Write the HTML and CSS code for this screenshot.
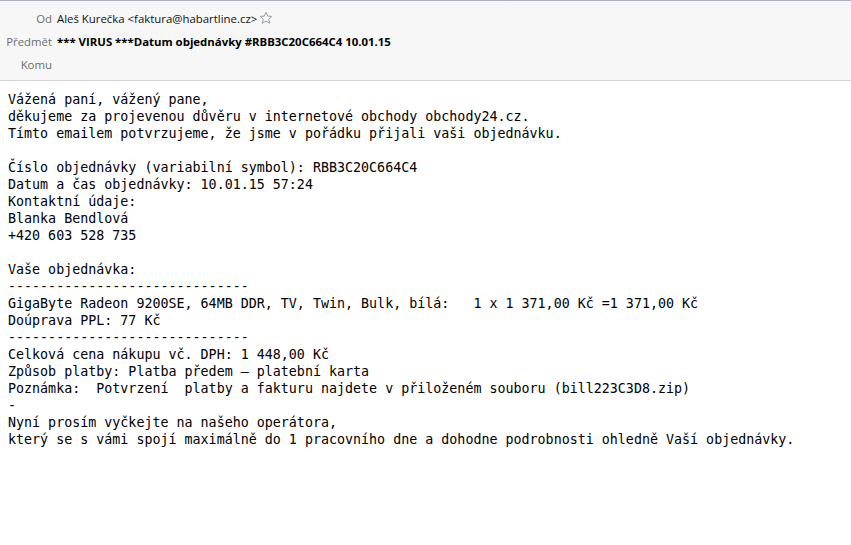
FILE: index.html
```html
<!DOCTYPE html>
<html lang="cs">
  <head>
    <meta charset="UTF-8" />
    <title>*** VIRUS ***Datum objednávky #RBB3C20C664C4 10.01.15</title>
    <link rel="stylesheet" href="styles.css">
  </head>
  <body>
    <div class="header">
      <div class="label">Od</div>
      <div class="value">
        Aleš Kurečka &lt;faktura@habartline.cz&gt;
        <svg class="star" width="14" height="14" viewBox="0 0 14 14">
          <path d="M7 1.2 L8.7 5.1 L12.9 5.4 L9.7 8.1 L10.7 12.3 L7 10.1 L3.3 12.3 L4.3 8.1 L1.1 5.4 L5.3 5.1 Z" fill="none" stroke="#9aa0a8" stroke-width="1" stroke-linejoin="round"/>
        </svg>
      </div>
      <div class="label">Předmět</div>
      <div class="value subject">*** VIRUS ***Datum objednávky #RBB3C20C664C4 10.01.15</div>
      <div class="label">Komu</div>
      <div class="value"></div>
    </div>

    <pre class="message">Vážená paní, vážený pane,
děkujeme za projevenou důvěru v internetové obchody obchody24.cz.
Tímto emailem potvrzujeme, že jsme v pořádku přijali vaši objednávku.

Číslo objednávky (variabilní symbol): RBB3C20C664C4
Datum a čas objednávky: 10.01.15 57:24
Kontaktní údaje:
Blanka Bendlová
+420 603 528 735

Vaše objednávka:
------------------------------
GigaByte Radeon 9200SE, 64MB DDR, TV, Twin, Bulk, bílá:   1 x 1 371,00 Kč =1 371,00 Kč
Doúprava PPL: 77 Kč
------------------------------
Celková cena nákupu vč. DPH: 1 448,00 Kč
Způsob platby: Platba předem – platební karta
Poznámka:  Potvrzení  platby a fakturu najdete v přiloženém souboru (bill223C3D8.zip)
-
Nyní prosím vyčkejte na našeho operátora,
který se s vámi spojí maximálně do 1 pracovního dne a dohodne podrobnosti ohledně Vaší objednávky.</pre>
  </body>
</html>
```

FILE: styles.css
```css
body {
  margin: 0;
  background: white;
  font-family: "Open Sans", sans-serif;
}
.header {
  display: grid;
  grid-template-columns: 52px 1fr;
  column-gap: 5px;
  grid-auto-rows: 23px;
  align-items: center;
  padding: 6px 0 4px;
  height: 69px;
  background: linear-gradient(#f3f5f7, #f7f7f7 12px);
  border-top: 1px solid #aab0c3;
  border-bottom: 1px solid #d4d4d4;
  font-size: 11.4px;
  color: #111;
}
.label {
  text-align: right;
  color: #6d6d6d;
}
.value {
  display: flex;
  align-items: center;
  gap: 2px;
  white-space: nowrap;
}
.subject {
  font-weight: bold;
  color: #000;
}
.star {
  margin-top: -2px;
}
.message {
  margin: 0;
  padding: 10px 8px;
  font-family: "DejaVu Sans Mono", monospace;
  font-size: 13.33px;
  line-height: 17px;
  color: #000;
}
```
